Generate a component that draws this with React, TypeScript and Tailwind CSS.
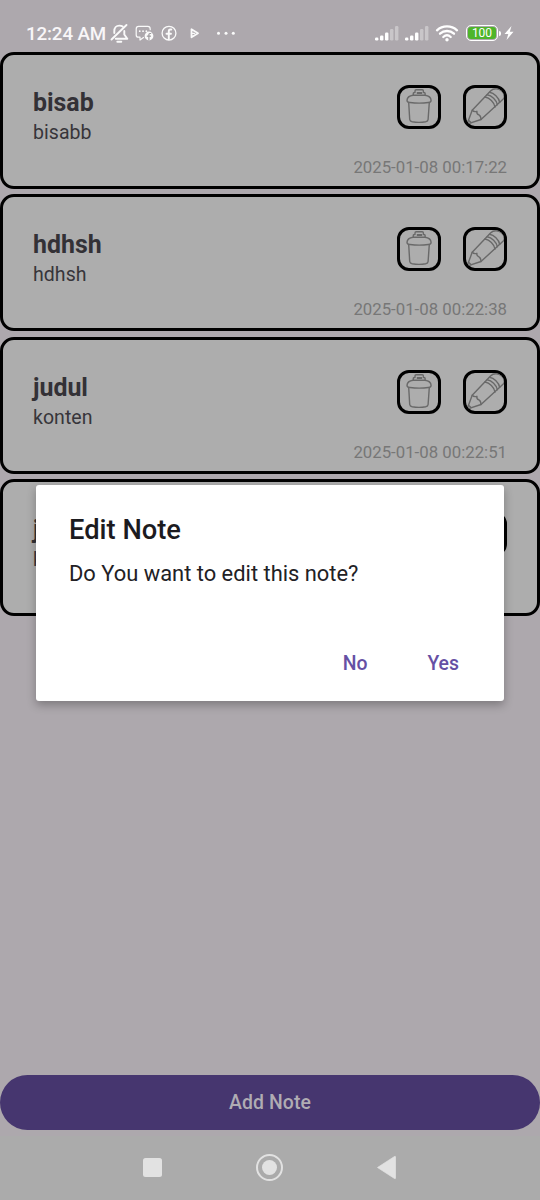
import React from "react";

type Note = { title: string; body: string; date?: string };

const notes: Note[] = [
  { title: "bisab", body: "bisabb", date: "2025-01-08 00:17:22" },
  { title: "hdhsh", body: "hdhsh", date: "2025-01-08 00:22:38" },
  { title: "judul", body: "konten", date: "2025-01-08 00:22:51" },
  { title: "j", body: "k" },
];

function TrashIcon() {
  return (
    <svg width="38" height="38" viewBox="0 0 38 38" fill="none" stroke="#696969" strokeWidth="1.400" strokeLinejoin="round" strokeLinecap="round">
      <path d="M8.700 14.500 9.700 31.500c.2 1.500 1 2 2.500 2.300 3.500.6 10 .6 13.500 0 1.500-.3 2.300-.8 2.400-2.300L29.300 14.500" />
      <path d="M10 14.500c-1.700 0-3-.8-3-2.300C7.200 9.500 9.500 7.700 13 7.200h12c3.500.5 5.900 2.200 6.100 5 0 1.500-1.100 2.200-2.800 2.300-5.500.7-12.800.7-18.300 0Z" />
      <path d="M13.300 7V5.500c0-.8.300-1 1-1h.7V3c0-.8.400-1.200 1.200-1.200h6c.8 0 1.200.4 1.200 1.200v1.500h.7c.7 0 1 .2 1 1V7" />
      <path d="M16.800 5h5.400" strokeWidth="2.200" strokeLinecap="butt" />
    </svg>
  );
}

function PencilIcon() {
  return (
    <svg width="38" height="38" viewBox="0 0 38 38" fill="none" stroke="#696969" strokeWidth="1.400" strokeLinejoin="round" strokeLinecap="round">
      <path d="M1 36.200 6.200 22.300 24.500 3c3-3 8-3 11.500.3 2.700 2.700 3.200 5.800 1 8L15 31.500Z" />
      <path d="M6.200 22.300c1.400 1.500 3 1.600 4.700 1-.3 1.800.3 3 2 3.500 1.500.8 2.100 2.800 2.100 4.700" />
      <path d="m2.500 32.300 2.500 2.300" />
      <path d="M19 9c4.500.8 9.200 5.200 10 10M21.200 6.700c4.500.8 9.200 5.200 10.200 10M23.500 4.300c4.500.8 9.200 5.200 10.200 10" />
    </svg>
  );
}

function IconBox({ children }: { children: React.ReactNode }) {
  return (
    <div className="flex size-11 items-center justify-center overflow-hidden rounded-[12px] border-[3px] border-black">
      {children}
    </div>
  );
}

function NoteCard({ note }: { note: Note }) {
  return (
    <div className="flex h-[137px] flex-none flex-col justify-between rounded-[14px] border-[3px] border-black bg-[#adadad] pt-[30px] pr-[30px] pb-[9px] pl-[30px]">
      <div className="flex justify-between">
        <div className="flex flex-col pt-[3px]">
          <div className="text-[24.900px] leading-[29px] font-bold text-[#333136]">{note.title}</div>
          <div className="mt-[4px] text-[19.500px] leading-[24px] tracking-[0.050px] text-[#37353a]">{note.body}</div>
        </div>
        <div className="flex gap-[22px]">
          <IconBox><TrashIcon /></IconBox>
          <IconBox><PencilIcon /></IconBox>
        </div>
      </div>
      <div className="text-right text-[16.800px] leading-[20px] text-[#777]">{note.date}</div>
    </div>
  );
}

function Signal() {
  return (
    <svg width="25" height="16" viewBox="0 0 25 16" fill="#fff">
      <rect x="0" y="11.500" width="3.400" height="3" rx="1.200" />
      <rect x="5" y="9.500" width="3.400" height="5" rx="1.200" />
      <rect x="10" y="6.500" width="3.400" height="8" rx="1.200" />
      <rect x="15" y="3" width="3.400" height="11.500" rx="1.200" opacity=".35" />
      <rect x="20" y="0" width="3.400" height="14.500" rx="1.200" opacity=".35" />
    </svg>
  );
}

function StatusBar() {
  return (
    <div className="flex h-[51px] flex-none items-start justify-between pt-[22px] pr-[26px] pl-[26px] text-white">
      <div className="flex h-[22px] items-center">
        <span className="w-[84px] pt-px text-[18.800px] leading-[22px] font-medium tracking-[-0.150px] whitespace-nowrap text-[#f8f6f8]">12:24 AM</span>
        <svg width="126" height="22" viewBox="110 22 126 22" fill="none" stroke="#fafafa" strokeWidth="1.500" strokeLinecap="round" strokeLinejoin="round">
          <path d="M111.500 39.500 126.500 25" strokeWidth="1.900" />
          <path d="M114.300 33V31c0-3 2-5.400 5-5.400 1.400 0 2.500.3 3.400 1M124.300 31v3.500l3 4.200h-11.500M117.300 41.800h4" strokeWidth="1.900" />
          <path d="M143.500 37.500 140 40v-2.800h-1.500c-1.500 0-2.300-1-2.300-2.300v-6c0-1.500 1-2.500 2.500-2.500h9c1.500 0 2.500 1 2.500 2.500v.8" strokeWidth="1.200" />
          <path d="M139.700 31.200h.1M143 31.200h.1M146.300 31.200h.1" strokeWidth="1.700" />
          <circle cx="149" cy="36" r="4.400" fill="#fafafa" stroke="none" />
          <path d="M150.700 33.500h-.8q-1 0-1 1v5.500M147.300 36.200h3.200" stroke="#9d9a9e" strokeWidth="1.200" />
          <circle cx="169" cy="33.200" r="6.900" strokeWidth="1.300" />
          <path d="M171.300 29.500h-1q-1.500 0-1.500 1.800v8M166.500 33.800h4.500" strokeWidth="1.900" />
          <path d="M191.500 29.300v8l6.500-4Z" strokeWidth="1.800" />
          <path d="M191.500 33.300h3" strokeWidth="1.300" />
          <g fill="#fafafa" stroke="none"><circle cx="218.500" cy="33.300" r="1.500" /><circle cx="226" cy="33.300" r="1.500" /><circle cx="233.300" cy="33.300" r="1.500" /></g>
        </svg>
      </div>
      <div className="flex h-[22px] items-center">
        <div className="flex gap-[5px] pt-[2px]"><Signal /><Signal /></div>
        <svg className="ml-[5px]" width="24" height="18" viewBox="0 0 24 18" fill="none" stroke="#fff" strokeWidth="2.300" strokeLinecap="round">
          <path d="M2 6.300c5.500-5.200 14.500-5.200 20 0M5 9.700c4-3.600 10-3.600 14 0M8.300 13c2.200-2 5.200-2 7.400 0" />
          <circle cx="12" cy="15.800" r="1.700" fill="#fff" stroke="none" />
        </svg>
        <div className="ml-[7px] flex h-[16px] w-[32px] items-center justify-center rounded-[5px] border-[1.500px] border-white p-px">
          <span className="flex h-full w-full items-center justify-center rounded-[3px] bg-[#4eb52a] text-[12px] leading-none">100</span>
        </div>
        <div className="ml-px h-[5px] w-[2px] rounded-r bg-white" />
        <svg className="ml-[3px]" width="10" height="14" viewBox="0 0 10 14" fill="#fff"><path d="M7.500 0 .5 8h3.800L2.500 14l7-8.200H5.800Z" /></svg>
      </div>
    </div>
  );
}

function Dialog() {
  return (
    <div className="absolute top-[485px] left-[36px] flex h-[216px] w-[468px] flex-col rounded-[3px] bg-white px-[33px] pt-[28px] shadow-[0_4px_10px_rgba(0,0,0,0.28)]">
      <h2 className="text-[27.300px] leading-[34px] font-medium text-[#1c1b1f]">Edit Note</h2>
      <p className="mt-[12px] text-[21.900px] leading-[30px] text-[#222125]">Do You want to edit this note?</p>
      <div className="mt-[63px] flex justify-end gap-[60px] pr-[12px] text-[19.400px] leading-[24px] font-medium text-[#6650a4]">
        <button>No</button>
        <button>Yes</button>
      </div>
    </div>
  );
}

export default function App() {
  return (
    <div className="relative flex h-[1200px] w-[540px] flex-col overflow-hidden bg-[#ada8ad] font-['Roboto',sans-serif]">
      <StatusBar />
      <main className="flex flex-1 flex-col gap-[5.500px] pt-[0.500px]">
        {notes.map((note, i) => <NoteCard key={i} note={note} />)}
      </main>
      <button className="mb-[6px] h-[55px] flex-none rounded-full bg-[#46366f] pt-[1px] text-[19.400px] font-medium tracking-[0.100px] text-[#b0acb3]">Add Note</button>
      <nav className="flex h-[64px] flex-none justify-center bg-[#ababab]">
        <svg width="270" height="64" viewBox="135 1136 270 64" fill="#e2e2e2">
          <rect x="143" y="1158" width="19" height="19" rx="2.500" />
          <circle cx="269.500" cy="1167.500" r="12.500" fill="none" stroke="#e2e2e2" strokeWidth="2" />
          <circle cx="269.500" cy="1167.500" r="7.500" />
          <path d="m377.500 1167.500 17-11q1-.5 1 .5v21q0 1-1 .5Z" stroke="#e2e2e2" strokeWidth=".7" strokeLinejoin="round" />
        </svg>
      </nav>
      <Dialog />
    </div>
  );
}
